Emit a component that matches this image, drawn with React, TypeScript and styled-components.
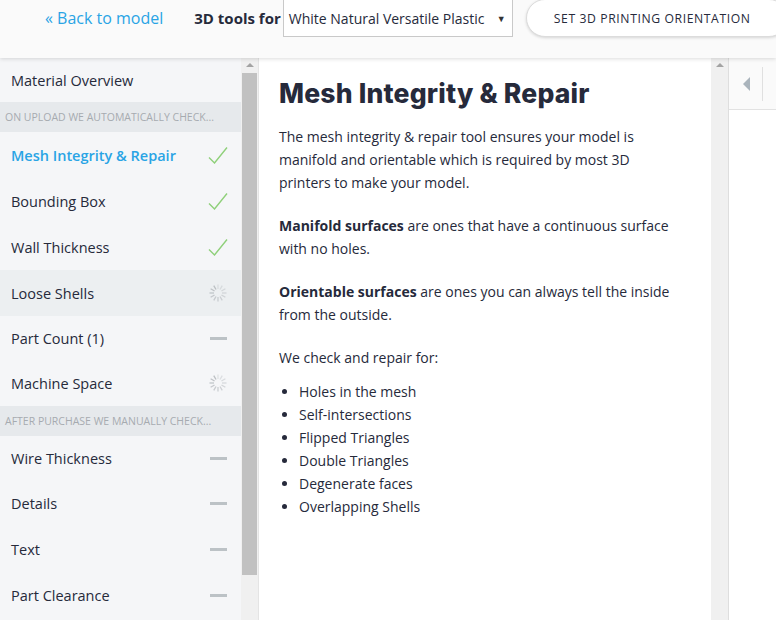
import React from "react";
import styled, { createGlobalStyle } from "styled-components";

const GlobalStyle = createGlobalStyle`
	html, body {
		margin: 0;
		padding: 0;
		overflow: hidden;
		background: #ffffff;
	}
	body {
		font-family: "Open Sans", "Liberation Sans", sans-serif;
		color: #262a3b;
	}
	* { box-sizing: border-box; }
`;

type Status = "ok" | "busy" | "none";

interface CheckItem {
	label: string;
	status: Status;
	active?: boolean;
	hover?: boolean;
	compact?: boolean;
}

const autoChecks: CheckItem[] = [
	{ label: "Mesh Integrity & Repair", status: "ok", active: true },
	{ label: "Bounding Box", status: "ok" },
	{ label: "Wall Thickness", status: "ok" },
	{ label: "Loose Shells", status: "busy", hover: true },
	{ label: "Part Count (1)", status: "none", compact: true },
	{ label: "Machine Space", status: "busy" },
];

const manualChecks: CheckItem[] = [
	{ label: "Wire Thickness", status: "none", compact: true },
	{ label: "Details", status: "none" },
	{ label: "Text", status: "none" },
	{ label: "Part Clearance", status: "none" },
];

const repairList = [
	"Holes in the mesh",
	"Self-intersections",
	"Flipped Triangles",
	"Double Triangles",
	"Degenerate faces",
	"Overlapping Shells",
];

function CheckIcon() {
	return (
		<svg width="20" height="18" viewBox="0 0 20 18">
			<path d="M1 11.5 L6.5 17 L19 1.5" fill="none" stroke="#8fd07a" strokeWidth="1.4" />
		</svg>
	);
}

function Spinner() {
	const spokes = Array.from({ length: 12 }, (_, i) => i);
	return (
		<svg width="20" height="20" viewBox="-10 -10 20 20">
			{spokes.map((i) => (
				<line
					key={i}
					x1="0"
					y1="-4"
					x2="0"
					y2="-8.5"
					stroke="#b8bcc0"
					strokeWidth="1.3"
					strokeOpacity={0.35 + (i / 12) * 0.65}
					transform={`rotate(${i * 30})`}
				/>
			))}
		</svg>
	);
}

function StatusIcon({ status }: { status: Status }) {
	if (status === "ok") return <CheckIcon />;
	if (status === "busy") return <Spinner />;
	return <Dash />;
}

function renderItems(items: CheckItem[]) {
	return items.map((item) => (
		<NavRow key={item.label} $hover={item.hover} $compact={item.compact}>
			<NavLabel $active={item.active}>{item.label}</NavLabel>
			<IconSlot>
				<StatusIcon status={item.status} />
			</IconSlot>
		</NavRow>
	));
}

export default function App() {
	return (
		<>
			<GlobalStyle />
			<Page>
				<TopBar>
					<BackLink>« Back to model</BackLink>
					<ToolsLabel>3D tools for</ToolsLabel>
					<MaterialSelect>
						<span>White Natural Versatile Plastic</span>
						<SelectArrow>▼</SelectArrow>
					</MaterialSelect>
					<OrientButton>SET 3D PRINTING ORIENTATION</OrientButton>
				</TopBar>

				<Body>
					<Sidebar>
						<SidebarList>
							<NavRow $compact>
								<NavLabel>Material Overview</NavLabel>
							</NavRow>
							<SectionHeader>ON UPLOAD WE AUTOMATICALLY CHECK...</SectionHeader>
							{renderItems(autoChecks)}
							<SectionHeader>AFTER PURCHASE WE MANUALLY CHECK...</SectionHeader>
							{renderItems(manualChecks)}
						</SidebarList>
						<ScrollTrack>
							<ScrollArrow />
							<ScrollThumb $show />
						</ScrollTrack>
					</Sidebar>

					<Content>
						<Article>
							<Title>Mesh Integrity &amp; Repair</Title>
							<Para>
								The mesh integrity &amp; repair tool ensures your model is manifold and orientable which is
								required by most 3D printers to make your model.
							</Para>
							<Para>
								<strong>Manifold surfaces</strong> are ones that have a continuous surface with no holes.
							</Para>
							<Para>
								<strong>Orientable surfaces</strong> are ones you can always tell the inside from the outside.
							</Para>
							<Para>We check and repair for:</Para>
							<BulletList>
								{repairList.map((entry) => (
									<li key={entry}>{entry}</li>
								))}
							</BulletList>
						</Article>
						<ScrollTrack>
							<ScrollArrow />
						</ScrollTrack>
					</Content>

					<ViewerPane>
						<ViewerToolbar>
							<CollapseArrow />
							<ToolbarDivider />
						</ViewerToolbar>
					</ViewerPane>
				</Body>
			</Page>
		</>
	);
}

//#region Styled Components

const Page = styled.div`
	width: 776px;
	height: 620px;
	display: flex;
	flex-direction: column;
	overflow: hidden;
`;

const TopBar = styled.header`
	position: relative;
	z-index: 2;
	height: 58px;
	flex: none;
	display: flex;
	align-items: flex-start;
	white-space: nowrap;
	background: #fafafa;
	box-shadow: 0 1px 4px rgba(0, 0, 0, 0.14);
`;

const BackLink = styled.a`
	flex: none;
	margin: 8px 0 0 45px;
	font-size: 16px;
	line-height: 20px;
	color: #29a4e5;
	cursor: pointer;
`;

const ToolsLabel = styled.span`
	flex: none;
	margin: 8px 0 0 31px;
	font-size: 15px;
	line-height: 20px;
	font-weight: 700;
	color: #262a3b;
`;

const MaterialSelect = styled.div`
	flex: none;
	margin: -1px 0 0 2px;
	width: 230px;
	height: 38px;
	display: flex;
	align-items: center;
	justify-content: space-between;
	padding: 0 6px 0 5px;
	background: #ffffff;
	border: 1px solid #c9c9c9;
	font-size: 14px;
	color: #262a3b;
`;

const SelectArrow = styled.span`
	font-size: 9px;
	color: #333;
`;

const OrientButton = styled.button`
	flex: none;
	margin: -1px 0 0 13px;
	width: 262px;
	height: 38px;
	padding: 0 0 0 2px;
	text-align: left;
	text-indent: 25px;
	border: 1px solid #dcdcdc;
	border-radius: 19px;
	background: #ffffff;
	box-shadow: 0 1px 3px rgba(0, 0, 0, 0.15);
	font-family: "Open Sans", "Liberation Sans", sans-serif;
	font-size: 12.2px;
	letter-spacing: 0.6px;
	color: #262a3b;
`;

const Body = styled.div`
	flex: 1;
	display: flex;
	min-height: 0;
`;

const Sidebar = styled.aside`
	width: 259px;
	flex: none;
	display: flex;
	border-right: 1px solid #e4e4e4;
	background: #f5f6f8;
`;

const SidebarList = styled.nav`
	width: 242px;
	display: flex;
	flex-direction: column;
`;

const NavRow = styled.div<{ $hover?: boolean; $compact?: boolean }>`
	height: ${(p) => (p.$compact ? 44 : 46)}px;
	flex: none;
	display: flex;
	align-items: center;
	justify-content: space-between;
	padding: 0 13px 0 11px;
	background: ${(p) => (p.$hover ? "#eceff1" : "transparent")};
`;

const NavLabel = styled.span<{ $active?: boolean }>`
	font-size: 14.5px;
	font-weight: ${(p) => (p.$active ? 600 : 400)};
	color: ${(p) => (p.$active ? "#29a4e5" : "#262a3b")};
`;

const IconSlot = styled.span`
	width: 20px;
	height: 20px;
	display: flex;
	align-items: center;
	justify-content: center;
`;

const Dash = styled.span`
	width: 17px;
	height: 3px;
	background: #bcc2c6;
`;

const SectionHeader = styled.div`
	height: 30px;
	flex: none;
	display: flex;
	align-items: center;
	padding-left: 5px;
	background: #e6e9ec;
	font-size: 10.5px;
	color: #a6abb0;
	white-space: nowrap;
	overflow: hidden;
`;

const ScrollTrack = styled.div`
	width: 17px;
	flex: none;
	background: #f0f0f0;
	display: flex;
	flex-direction: column;
	align-items: center;
`;

const ScrollArrow = styled.div`
	margin-top: 5px;
	width: 0;
	height: 0;
	border-left: 4px solid transparent;
	border-right: 4px solid transparent;
	border-bottom: 4px solid #a3a3a3;
`;

const ScrollThumb = styled.div<{ $show?: boolean }>`
	margin-top: 6px;
	width: 15px;
	height: 502px;
	background: #c1c1c1;
	display: ${(p) => (p.$show ? "block" : "none")};
`;

const Content = styled.main`
	width: 470px;
	flex: none;
	display: flex;
	background: #ffffff;
	border-right: 1px solid #dedede;
`;

const Article = styled.article`
	width: 452px;
	padding: 18px 32px 0 20px;
	font-size: 14px;
	line-height: 23px;
	color: #262a3b;
`;

const Title = styled.h1`
	margin: 0 0 15px;
	font-family: Inter, "Liberation Sans", sans-serif;
	font-size: 26.5px;
	line-height: 34px;
	font-weight: 800;
	letter-spacing: 0.2px;
	color: #262a3b;
`;

const Para = styled.p`
	margin: 0 0 20px;

	strong {
		font-weight: 700;
	}
`;

const BulletList = styled.ul`
	margin: -9px 0 0;
	padding-left: 20px;
`;

const ViewerPane = styled.section`
	flex: 1;
	background: #ffffff;
`;

const ViewerToolbar = styled.div`
	height: 52px;
	display: flex;
	align-items: center;
	gap: 12px;
	padding-left: 14px;
	background: #fafafa;
	border-bottom: 1px solid #e2e2e2;
`;

const CollapseArrow = styled.div`
	width: 0;
	height: 0;
	border-top: 7px solid transparent;
	border-bottom: 7px solid transparent;
	border-right: 7px solid #aab4bc;
`;

const ToolbarDivider = styled.div`
	width: 1px;
	height: 34px;
	background: #e0e0e0;
`;

//#endregion
